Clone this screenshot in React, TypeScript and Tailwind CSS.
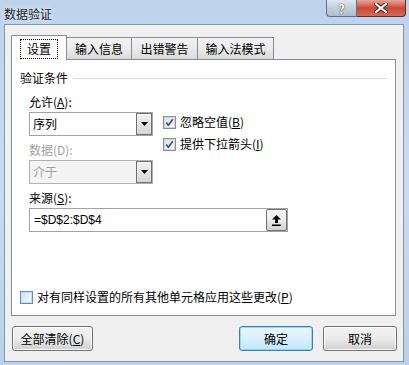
import React from "react";

const font = { fontFamily: '"Noto Sans CJK SC", "Liberation Sans", sans-serif' };

function Check({ checked }: { checked?: boolean }) {
  return (
    <span className="flex h-[13px] w-[13px] shrink-0 items-center justify-center border border-[#8e8f8f] bg-white">
      <span className="flex h-[11px] w-[11px] items-center justify-center border border-[#d4d6d9] bg-gradient-to-br from-[#dcdfe3] to-[#fbfbfb]">
        {checked && (
          <svg width="9" height="9" viewBox="0 0 9 9">
            <path d="M1.2 4.6 L3.4 7.2 L7.8 1.2" fill="none" stroke="#3a4f88" strokeWidth="1.7" />
          </svg>
        )}
      </span>
    </span>
  );
}

function ComboArrow() {
  return (
    <span className="flex h-full w-[16px] items-center justify-center border border-[#707070] bg-gradient-to-b from-[#f2f2f2] to-[#d5d5d5]">
      <svg width="7" height="4" viewBox="0 0 7 4">
        <path d="M0 0 H7 L3.5 4 Z" fill="#000" />
      </svg>
    </span>
  );
}

function Button({ label, primary }: { label: React.ReactNode; primary?: boolean }) {
  return (
    <button
      className={
        "flex h-[25px] items-center justify-center rounded-[3px] border text-[12px] leading-[16px] text-black " +
        (primary
          ? "w-[74px] border-[#3c7fb1] bg-gradient-to-b from-[#eaf6fd] via-[#d9f0fc] to-[#bee6fd] shadow-[inset_0_0_0_1px_#9ad4f5]"
          : "w-[74px] border-[#707070] bg-gradient-to-b from-[#f2f2f2] via-[#ebebeb] to-[#cfcfcf] shadow-[inset_0_0_0_1px_#fcfcfc]")
      }
    >
      {label}
    </button>
  );
}

export default function App() {
  return (
    <div
      className="flex h-[365px] w-[409px] flex-col overflow-hidden bg-gradient-to-b from-[#bdd3ec] via-[#c9dcf0] to-[#b9d1ea]"
      style={font}
    >
      {/* title bar */}
      <div className="flex h-[24px] shrink-0 items-start">
        <div className="pl-[4px] pt-[6px] text-[12px] leading-[16px] text-[#1e1e1e] [text-shadow:0_0_6px_#ffffff]">
          数据验证
        </div>
        <div className="ml-auto mr-[3px] flex">
          <div className="flex h-[17px] w-[31px] items-center justify-center rounded-bl-[4px] border border-t-0 border-[#5f6f86] bg-gradient-to-b from-[#dfe8f1] via-[#c3cfdc] to-[#aebdcd] text-[13px] font-bold leading-none text-white [text-shadow:0_0_1px_#333,0_0_1px_#333]">
            ?
          </div>
          <div className="flex h-[17px] w-[49px] items-center justify-center rounded-br-[4px] border border-l-0 border-t-0 border-[#6a2a24] bg-gradient-to-b from-[#e8a597] via-[#c74a37] to-[#d66a55]">
            <svg width="14" height="10" viewBox="0 0 14 10">
              <path d="M2 1 L12 9 M12 1 L2 9" stroke="#3a1a16" strokeWidth="4" strokeLinecap="square" />
              <path d="M2 1 L12 9 M12 1 L2 9" stroke="#ffffff" strokeWidth="2.2" strokeLinecap="square" />
            </svg>
          </div>
        </div>
      </div>

      {/* client area */}
      <div className="ml-[4px] flex h-[338px] w-[400px] flex-col border border-[#8395ab] bg-[#f0f0f0] pl-[6px] pr-[6px] pt-[10px] text-[12px] leading-[16px] text-black">
        {/* tabs */}
        <div className="relative z-10 flex h-[24px] items-end">
          <div className="flex h-[25px] w-[56px] -mb-px items-start justify-center border border-b-0 border-[#898c95] bg-white pt-[3px]">
            <span className="border border-dotted border-black px-[6px] py-px">设置</span>
          </div>
          <div className="flex h-[22px] w-[66px] -ml-px items-center justify-center border border-b-0 border-[#898c95] bg-gradient-to-b from-[#f3f3f3] via-[#ebebeb] to-[#dadada]">
            输入信息
          </div>
          <div className="flex h-[22px] w-[67px] -ml-px items-center justify-center border border-b-0 border-[#898c95] bg-gradient-to-b from-[#f3f3f3] via-[#ebebeb] to-[#dadada]">
            出错警告
          </div>
          <div className="flex h-[22px] w-[77px] -ml-px items-center justify-center border border-b-0 border-[#898c95] bg-gradient-to-b from-[#f3f3f3] via-[#ebebeb] to-[#dadada]">
            输入法模式
          </div>
        </div>

        {/* tab panel */}
        <div className="flex h-[257px] w-[385px] flex-col border border-[#898c95] bg-white">
          <div className="ml-[8px] mr-[7px] mt-[10px] flex items-center">
            <span>验证条件</span>
            <span className="ml-[5px] h-px flex-1 bg-[#d5dfe5]" />
          </div>

          <div className="ml-[17px] mt-[8px] flex">
            <div className="flex w-[124px] flex-col">
              <span>
                允许(<u>A</u>):
              </span>
              <div className="mt-[2px] flex h-[24px] border border-[#a3a3a3] bg-white">
                <span className="flex flex-1 items-center pl-[3px]">序列</span>
                <ComboArrow />
              </div>
              <span className="mt-[6px] text-[#a0a0a0]">数据(D):</span>
              <div className="mt-[2px] flex h-[24px] border border-[#adb2b5] bg-[#f4f4f4]">
                <span className="flex flex-1 items-center pl-[3px] text-[#a0a0a0]">介于</span>
                <ComboArrow />
              </div>
            </div>
            <div className="ml-[10px] mt-[20px] flex flex-col gap-[6px]">
              <label className="flex h-[16px] items-center gap-[4px]">
                <Check checked />
                <span>
                  忽略空值(<u>B</u>)
                </span>
              </label>
              <label className="flex h-[16px] items-center gap-[4px]">
                <Check checked />
                <span>
                  提供下拉箭头(<u>I</u>)
                </span>
              </label>
            </div>
          </div>

          <span className="ml-[17px] mt-[6px]">
            来源(<u>S</u>):
          </span>
          <div className="ml-[17px] mt-[2px] flex h-[24px] w-[259px] items-center border border-[#a3a3a3] bg-white">
            <span className="flex-1 pl-[4px]" style={{ fontFamily: '"Liberation Sans", sans-serif', fontSize: 12 }}>
              =$D$2:$D$4
            </span>
            <span className="flex h-[22px] w-[21px] items-center justify-center rounded-[2px] border border-[#707070] bg-gradient-to-b from-[#f7f7f7] via-[#ececec] to-[#d2d2d2]">
              <svg width="9" height="11" viewBox="0 0 9 11">
                <path d="M4.5 0 L9 4.5 H6 V8 H3 V4.5 H0 Z" fill="#000" />
                <rect x="0" y="9.5" width="9" height="1.5" fill="#000" />
              </svg>
            </span>
          </div>

          <label className="ml-[8px] mb-[10px] mt-auto flex h-[16px] items-center gap-[4px]">
            <span className="flex h-[13px] w-[13px] shrink-0 items-center justify-center border border-[#5b8fc7] bg-white">
              <span className="h-[11px] w-[11px] border border-[#c6dff2] bg-gradient-to-br from-[#c9e4f7] to-[#f4fbff]" />
            </span>
            <span>
              对有同样设置的所有其他单元格应用这些更改(<u>P</u>)
            </span>
          </label>
        </div>

        {/* buttons */}
        <div className="ml-[1px] mt-[10px] flex w-[385px]">
          <div className="w-[80px]">
            <button className="flex h-[25px] w-[81px] items-center justify-center rounded-[3px] border border-[#707070] bg-gradient-to-b from-[#f2f2f2] via-[#ebebeb] to-[#cfcfcf] shadow-[inset_0_0_0_1px_#fcfcfc]">
              全部清除(<u>C</u>)
            </button>
          </div>
          <div className="ml-auto flex gap-[10px]">
            <Button label="确定" primary />
            <Button label="取消" />
          </div>
        </div>
      </div>
    </div>
  );
}
